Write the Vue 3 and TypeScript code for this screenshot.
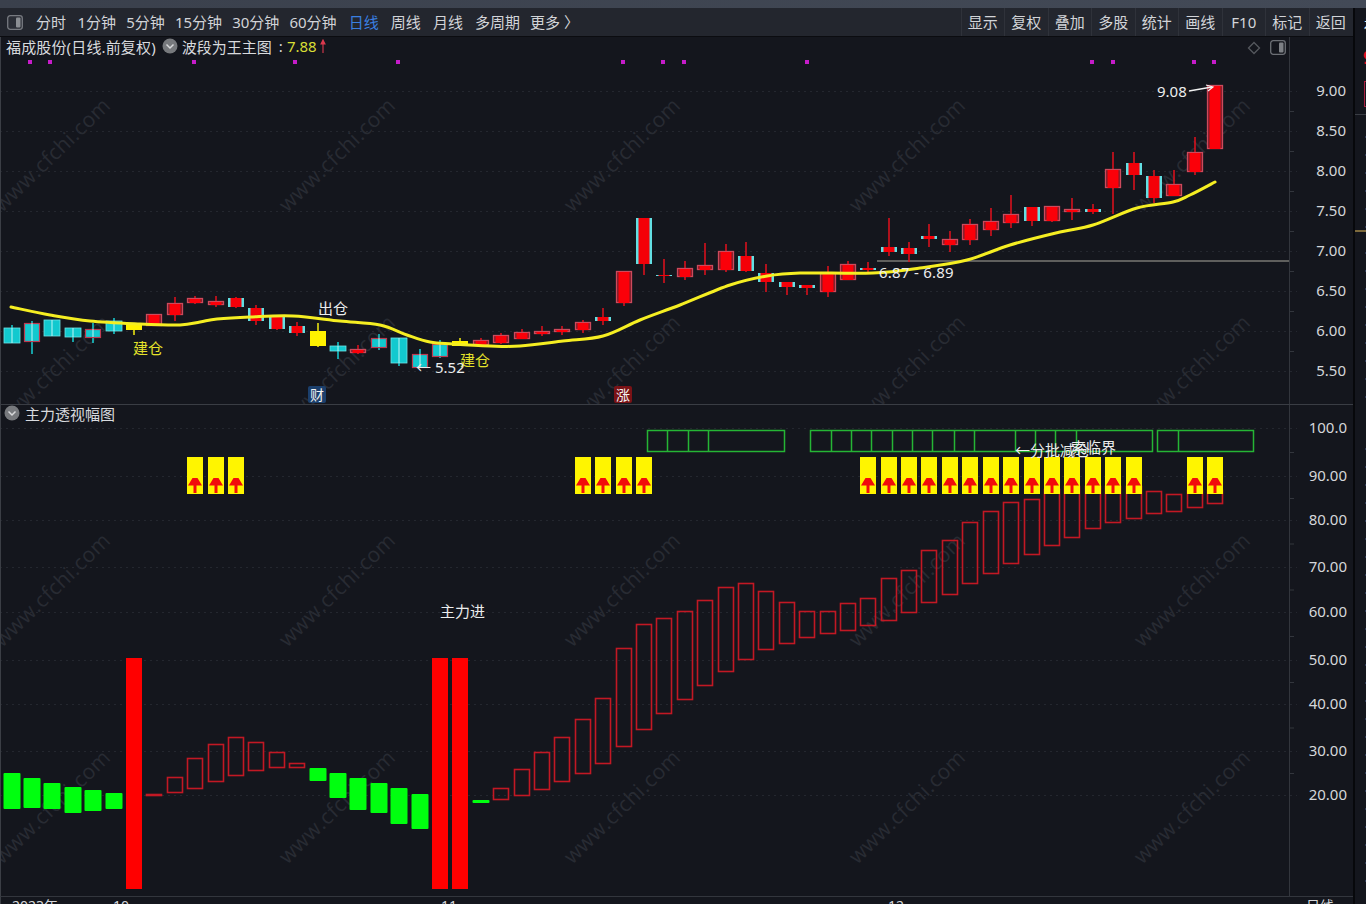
<script setup lang="ts">
type CandleKind = 'r' | 'c' | 'rc' | 'cr' | 'y'
interface Candle { x: number; top: number; bottom: number; high: number; low: number; kind: CandleKind }
type BarKind = 'g' | 'R' | 'o'
interface Bar { x: number; top: number; bottom: number; kind: BarKind }

const xAt = (i: number): number => Math.round(11.5 + 20.4 * i)

const leftTabs = ['分时', '1分钟', '5分钟', '15分钟', '30分钟', '60分钟', '日线', '周线', '月线', '多周期', '更多 〉']
const rightTabs = ['显示', '复权', '叠加', '多股', '统计', '画线', 'F10', '标记', '返回']

const rawCandles: [number, number, number, number, CandleKind][] = [
  [328, 343, 325, 343, 'c'], [323, 341, 321, 354, 'cr'], [320, 336, 320, 336, 'c'], [328, 337, 328, 342, 'c'],
  [329, 337, 323, 343, 'cr'], [321, 331, 318, 334, 'c'], [323, 330, 323, 335, 'y'], [314, 325, 314, 326, 'r'],
  [303, 314, 297, 321, 'r'], [298, 302, 296, 304, 'r'], [301, 304, 296, 307, 'r'], [298, 307, 297, 308, 'rc'],
  [308, 321, 305, 325, 'rc'], [317, 329, 315, 330, 'rc'], [326, 333, 322, 336, 'rc'], [331, 346, 323, 347, 'y'],
  [346, 351, 342, 359, 'c'], [349, 352, 345, 354, 'r'], [338, 347, 334, 350, 'cr'], [338, 363, 338, 366, 'c'],
  [354, 367, 349, 368, 'cr'], [344, 356, 340, 358, 'cr'], [341, 346, 338, 346, 'y'], [340, 344, 338, 346, 'r'],
  [335, 342, 333, 344, 'r'], [332, 338, 329, 339, 'r'], [331, 333, 326, 336, 'r'], [329, 331, 326, 335, 'r'],
  [322, 329, 320, 333, 'r'], [317, 321, 308, 325, 'rc'], [271, 302, 271, 306, 'r'], [218, 264, 218, 275, 'rc'],
  [275, 276, 259, 283, 'rc'], [268, 276, 261, 280, 'r'], [265, 269, 243, 275, 'r'], [251, 269, 244, 272, 'r'],
  [256, 271, 242, 272, 'rc'], [273, 282, 264, 292, 'rc'], [282, 287, 282, 295, 'rc'], [285, 288, 285, 295, 'rc'],
  [273, 291, 266, 297, 'r'], [264, 279, 261, 280, 'r'], [268, 270, 262, 274, 'rc'], [247, 252, 218, 256, 'rc'],
  [248, 254, 242, 262, 'rc'], [236, 239, 224, 247, 'rc'], [239, 244, 231, 252, 'r'], [224, 239, 219, 245, 'r'],
  [221, 229, 208, 236, 'r'], [214, 222, 195, 228, 'r'], [207, 221, 207, 226, 'rc'], [206, 220, 206, 222, 'r'],
  [209, 211, 198, 220, 'r'], [209, 212, 204, 214, 'rc'], [169, 187, 152, 214, 'r'], [163, 175, 152, 190, 'rc'],
  [176, 198, 170, 203, 'rc'], [184, 195, 170, 195, 'r'], [152, 171, 137, 175, 'r'], [85, 148, 85, 148, 'r'],
]
const candles: Candle[] = rawCandles.map((c, i) => ({ x: xAt(i), top: c[0], bottom: c[1], high: c[2], low: c[3], kind: c[4] }))

const rawBars: [number, number, BarKind][] = [
  [773, 809, 'g'], [778, 808, 'g'], [783, 809, 'g'], [787, 813, 'g'], [790, 811, 'g'], [793, 809, 'g'], [658, 889, 'R'],
  [794, 795, 'o'], [777, 792, 'o'], [758, 788, 'o'], [744, 781, 'o'], [737, 775, 'o'], [742, 770, 'o'], [752, 767, 'o'],
  [763, 767, 'o'], [768, 781, 'g'], [773, 798, 'g'], [778, 810, 'g'], [783, 813, 'g'], [788, 824, 'g'], [794, 829, 'g'],
  [658, 889, 'R'], [658, 889, 'R'], [800, 803, 'g'], [788, 799, 'o'], [769, 795, 'o'], [752, 789, 'o'], [737, 781, 'o'],
  [719, 773, 'o'], [698, 763, 'o'], [648, 746, 'o'], [624, 729, 'o'], [618, 713, 'o'], [611, 699, 'o'], [600, 685, 'o'],
  [587, 671, 'o'], [583, 659, 'o'], [591, 649, 'o'], [602, 643, 'o'], [611, 637, 'o'], [611, 633, 'o'], [603, 630, 'o'],
  [598, 625, 'o'], [578, 620, 'o'], [570, 612, 'o'], [550, 602, 'o'], [540, 594, 'o'], [522, 583, 'o'], [511, 573, 'o'],
  [502, 563, 'o'], [499, 554, 'o'], [489, 545, 'o'], [486, 537, 'o'], [486, 528, 'o'], [486, 522, 'o'], [486, 518, 'o'],
  [491, 513, 'o'], [494, 511, 'o'], [490, 507, 'o'], [490, 503, 'o'],
]
const bars: Bar[] = rawBars.map((b, i) => ({ x: xAt(i), top: b[0], bottom: b[1], kind: b[2] }))

const signalIdx = [9, 10, 11, 28, 29, 30, 31, 42, 43, 44, 45, 46, 47, 48, 49, 50, 51, 52, 53, 54, 55, 58, 59]
const signals = signalIdx.map(xAt)
const arrowPoints = (x: number): string =>
  `${x - 2.5},478 ${x + 2.5},478 ${x + 7},485.5 ${x + 1.5},485.5 ${x + 1.5},493 ${x - 1.5},493 ${x - 1.5},485.5 ${x - 7},485.5`

const dots = [30, 50, 194, 295, 398, 623, 663, 684, 807, 1092, 1113, 1194, 1214]

const maPoints: [number, number][] = [
  [11, 307], [50, 315], [90, 321], [140, 324], [180, 325], [200, 322], [217, 319], [250, 317], [293, 316], [340, 321],
  [380, 325], [407, 335], [430, 342], [453, 344], [490, 346], [520, 346], [563, 341], [603, 336], [640, 320], [680, 305],
  [730, 285], [767, 276], [800, 273], [873, 273], [920, 268], [967, 260], [1010, 245], [1060, 232], [1093, 225],
  [1137, 208], [1173, 202], [1190, 195], [1215, 182],
]
const smoothPath = (pts: [number, number][]): string => {
  let d = `M${pts[0][0]} ${pts[0][1]}`
  for (let i = 0; i < pts.length - 1; i++) {
    const p0 = pts[Math.max(0, i - 1)]
    const p1 = pts[i]
    const p2 = pts[i + 1]
    const p3 = pts[Math.min(pts.length - 1, i + 2)]
    const c1x = p1[0] + (p2[0] - p0[0]) / 6
    const c1y = p1[1] + (p2[1] - p0[1]) / 6
    const c2x = p2[0] - (p3[0] - p1[0]) / 6
    const c2y = p2[1] - (p3[1] - p1[1]) / 6
    d += ` C${c1x.toFixed(1)} ${c1y.toFixed(1)} ${c2x.toFixed(1)} ${c2y.toFixed(1)} ${p2[0]} ${p2[1]}`
  }
  return d
}
const maPath = smoothPath(maPoints)

const upperAxis = [[91, '9.00'], [131, '8.50'], [171, '8.00'], [211, '7.50'], [251, '7.00'], [291, '6.50'], [331, '6.00'], [371, '5.50']] as const
const lowerAxis = [[428, '100.0'], [476, '90.00'], [520, '80.00'], [567, '70.00'], [612, '60.00'], [660, '50.00'], [704, '40.00'], [751, '30.00'], [795, '20.00']] as const

const minorTicks = (ys: readonly (readonly [number, string])[]): number[] => {
  const out: number[] = []
  ys.forEach((row, i) => {
    if (i < ys.length - 1) out.push((row[0] + ys[i + 1][0]) / 2)
  })
  return out
}

const cellGroups = [
  { from: 647, to: 784, seps: [667, 688, 708] },
  { from: 810, to: 1152, seps: [831, 851, 871, 892, 912, 932, 954, 974, 1015, 1035, 1055, 1076] },
  { from: 1157, to: 1253, seps: [1178] },
]

const wmXs = [57, 342, 627, 912, 1197]
const wmUpper = [160, 377]
const wmLower = [595, 812]

const sideRows = [128, 146, 164, 182, 200, 218, 244, 262, 280, 298, 316, 334, 352, 370, 388, 440, 458, 476, 494, 512, 530, 548, 566, 584, 602, 620, 638, 656, 674, 692, 710, 728, 746, 764, 782, 800, 818, 836, 854, 872]

const wickColor = (k: CandleKind): string => (k === 'c' || k === 'cr' ? '#17cfd3' : k === 'y' ? '#f5ee10' : '#e3101c')
</script>

<template>
  <div class="screen">
    <div class="topstrip"></div>
    <div class="body">
      <div class="main">
        <header class="toolbar">
          <span class="panel-icon">
            <svg width="16" height="15" viewBox="0 0 16 15">
              <rect x="0.7" y="0.7" width="14.6" height="13.6" rx="2.5" fill="#2b2e36" stroke="#777a80" stroke-width="1.3" />
              <rect x="9" y="2.5" width="4.5" height="10" rx="1" fill="#8b8e93" />
            </svg>
          </span>
          <nav class="tabs">
            <span v-for="t in leftTabs" :key="t" class="tab" :class="{ active: t === '日线' }">{{ t }}</span>
          </nav>
          <nav class="actions">
            <span v-for="t in rightTabs" :key="t" class="action">{{ t }}</span>
          </nav>
        </header>

        <section class="pane pane-upper">
          <svg class="plot" width="1352" height="367" viewBox="1 37 1352 367">
            <text v-for="(p, i) in wmXs.flatMap(x => wmUpper.map(y => [x, y]))" :key="'wu' + i" :transform="`translate(${p[0]} ${p[1]}) rotate(-44)`" class="wm" text-anchor="middle">www.cfchi.com</text>

            <line v-for="a in upperAxis" :key="a[1]" x1="0" x2="1297" :y1="a[0] + 0.5" :y2="a[0] + 0.5" class="grid" />
            <line x1="1289.5" x2="1289.5" y1="37" y2="404" class="axis" />
            <line v-for="y in minorTicks(upperAxis)" :key="y" x1="1290" x2="1294" :y1="y + 0.5" :y2="y + 0.5" class="axis" />
            <text v-for="a in upperAxis" :key="a[1] + 't'" x="1346" :y="a[0] + 5" class="axis-label" text-anchor="end">{{ a[1] }}</text>

            <rect v-for="x in dots" :key="x" :x="x - 2" y="60" width="4" height="4" fill="#c61cc9" />

            <line x1="877" x2="1289" y1="261" y2="261" stroke="#a9a89d" stroke-width="1.2" />

            <g v-for="(c, i) in candles" :key="'c' + i">
              <line :x1="c.x" :x2="c.x" :y1="c.high" :y2="c.low" :stroke="wickColor(c.kind)" stroke-width="1.5" />
              <template v-if="c.kind === 'c'">
                <rect :x="c.x - 8" :y="c.top" width="16" :height="c.bottom - c.top" fill="#12c9cf" stroke="#6fe3e6" stroke-width="0.8" />
                <line :x1="c.x" :x2="c.x" :y1="c.top" :y2="c.bottom" stroke="#bff5f6" stroke-width="1" />
              </template>
              <template v-else-if="c.kind === 'cr'">
                <rect :x="c.x - 7.5" :y="c.top + 0.5" width="15" :height="c.bottom - c.top" fill="#12c9cf" stroke="#bd3a50" stroke-width="1.2" />
                <line :x1="c.x" :x2="c.x" :y1="c.top" :y2="c.bottom" stroke="#bff5f6" stroke-width="1" />
              </template>
              <template v-else-if="c.kind === 'rc'">
                <rect :x="c.x - 8" :y="c.top" width="16" :height="c.bottom - c.top" fill="#63dfe3" />
                <rect :x="c.x - 5.5" :y="c.top" width="11" :height="c.bottom - c.top" fill="#f40008" />
              </template>
              <template v-else-if="c.kind === 'y'">
                <rect :x="c.x - 8" :y="c.top" width="16" :height="c.bottom - c.top" fill="#fff200" />
              </template>
              <template v-else>
                <rect :x="c.x - 7.5" :y="c.top + 0.5" width="15" :height="c.bottom - c.top" fill="#7a1c28" stroke="#cc4a5c" stroke-width="1.3" />
                <rect :x="c.x - 5.5" :y="c.top + 1" width="11" :height="c.bottom - c.top" fill="#fb0009" />
              </template>
            </g>

            <path :d="maPath" class="ma" />

            <text x="133" y="354" class="lbl yellow">建仓</text>
            <text x="318" y="314" class="lbl white">出仓</text>
            <text x="460" y="366" class="lbl yellow">建仓</text>
            <text y="373" class="lbl white"><tspan x="416">←</tspan><tspan x="435">5.52</tspan></text>
            <text x="879" y="278" class="lbl white tracked">6.87 - 6.89</text>
            <text x="1157" y="97" class="lbl white">9.08</text>
            <line x1="1189" y1="91" x2="1212" y2="87" stroke="#f2f2f2" stroke-width="1.3" />
            <polyline points="1206,85 1213,87 1208,91" fill="none" stroke="#f2f2f2" stroke-width="1.2" />

            <rect x="308" y="386" width="18" height="17" rx="2" fill="#1b3f6c" />
            <text x="317" y="400" class="badge" text-anchor="middle">财</text>
            <rect x="614" y="386" width="18" height="17" rx="2" fill="#7a1216" />
            <text x="623" y="400" class="badge" text-anchor="middle">涨</text>
          </svg>

          <div class="title-bar">
            <span class="stock">福成股份(日线.前复权)</span>
            <svg class="chevron first" width="16" height="16" viewBox="0 0 16 16">
              <circle cx="8" cy="8" r="7.5" fill="#77797d" />
              <path d="M4.5 6.5 8 10l3.5-3.5" fill="none" stroke="#d8d9db" stroke-width="1.5" />
            </svg>
            <span>波段为王主图</span>
            <span class="colon">:</span>
            <span class="price">7.88</span>
            <svg class="up" width="6" height="15" viewBox="0 0 6 15">
              <path d="M3 14V1M1 5 3 1l2 4Z" fill="#dc3a4e" stroke="#dc3a4e" stroke-width="1.1" />
            </svg>
          </div>

          <div class="corner-icons">
            <svg width="14" height="14" viewBox="0 0 14 14">
              <path d="M7 1.5 12.5 7 7 12.5 1.5 7Z" fill="none" stroke="#55585e" stroke-width="1.3" />
            </svg>
            <svg width="16" height="15" viewBox="0 0 16 15">
              <rect x="0.7" y="0.7" width="14.6" height="13.6" rx="2.5" fill="none" stroke="#6c6f75" stroke-width="1.3" />
              <rect x="9" y="2.5" width="4.5" height="10" rx="1" fill="#7d8085" />
            </svg>
          </div>
        </section>

        <section class="pane pane-lower">
          <svg class="plot" width="1352" height="491" viewBox="1 405 1352 491">
            <text v-for="(p, i) in wmXs.flatMap(x => wmLower.map(y => [x, y]))" :key="'wl' + i" :transform="`translate(${p[0]} ${p[1]}) rotate(-44)`" class="wm" text-anchor="middle">www.cfchi.com</text>

            <line v-for="a in lowerAxis" :key="a[1]" x1="0" x2="1297" :y1="a[0] + 0.5" :y2="a[0] + 0.5" class="grid" />
            <line x1="1289.5" x2="1289.5" y1="405" y2="896" class="axis" />
            <line v-for="y in minorTicks(lowerAxis)" :key="y" x1="1290" x2="1294" :y1="y + 0.5" :y2="y + 0.5" class="axis" />
            <text v-for="a in lowerAxis" :key="a[1] + 't'" x="1347" :y="a[0] + 5" class="axis-label" text-anchor="end">{{ a[1] }}</text>

            <g v-for="(b, i) in bars" :key="'b' + i">
              <rect v-if="b.kind === 'g'" :x="b.x - 8.5" :y="b.top" width="17" :height="b.bottom - b.top" rx="1" fill="#00ff0f" />
              <rect v-else-if="b.kind === 'R'" :x="b.x - 8" :y="b.top" width="16" :height="b.bottom - b.top" fill="#ff0000" />
              <rect v-else :x="b.x - 7.5" :y="b.top + 0.5" width="15" :height="b.bottom - b.top" fill="none" stroke="#c21824" stroke-width="1.6" />
            </g>

            <g v-for="g in cellGroups" :key="g.from">
              <rect :x="g.from + 0.5" y="430.5" :width="g.to - g.from" height="21" fill="none" stroke="#25b535" stroke-width="1.5" />
              <line v-for="s in g.seps" :key="s" :x1="s + 0.5" :x2="s + 0.5" y1="431" y2="451" stroke="#25b535" stroke-width="1.5" />
            </g>

            <g v-for="x in signals" :key="'s' + x">
              <rect :x="x - 8" y="457" width="16" height="37" fill="#fff500" />
              <polygon :points="arrowPoints(x)" fill="#f20b0b" />
            </g>

            <text x="1015" y="456" class="lbl white">←分批减仓</text>
            <text x="1071" y="453" class="lbl white">索临界</text>
            <text x="440" y="617" class="lbl white">主力进</text>
          </svg>

          <div class="title-bar lower-title">
            <svg class="chevron" width="16" height="16" viewBox="0 0 16 16">
              <circle cx="8" cy="8" r="7.5" fill="#77797d" />
              <path d="M4.5 6.5 8 10l3.5-3.5" fill="none" stroke="#d8d9db" stroke-width="1.5" />
            </svg>
            <span>主力透视幅图</span>
          </div>
        </section>

        <footer class="timeline">
          <span class="year">2023年</span>
          <span class="month m10">10</span>
          <span class="month m11">11</span>
          <span class="month m12">12</span>
          <span class="period">日线</span>
        </footer>
      </div>

      <aside class="side">
        <span class="side-name">福</span>
        <span class="side-price">9</span>
        <span class="side-box"></span>
        <span class="side-line"></span>
        <span class="side-gold"></span>
        <span v-for="y in sideRows" :key="y" class="side-dot" :style="{ top: y + 'px' }"></span>
      </aside>
    </div>
  </div>
</template>

<style>
html, body { margin: 0; background: #14161d; overflow: hidden; }
</style>

<style scoped>
.screen {
  width: 1366px;
  height: 904px;
  display: flex;
  flex-direction: column;
  background: #14161d;
  font-family: "Noto Sans", "Noto Sans CJK SC", sans-serif;
  color: #d4d6da;
  overflow: hidden;
}
.topstrip {
  height: 8px;
  flex: none;
  background: linear-gradient(90deg, #3a404c, #434a57);
}
.body { flex: 1; display: flex; min-height: 0; }
.main {
  width: 1353px;
  flex: none;
  display: flex;
  flex-direction: column;
  border-right: 2px solid #07080b;
  box-sizing: content-box;
}
.toolbar {
  height: 28px;
  flex: none;
  display: flex;
  align-items: center;
  background: #23262e;
  border-bottom: 1px solid #0b0c10;
  padding-left: 7px;
}
.panel-icon { display: flex; width: 29px; flex: none; }
.tabs { display: flex; gap: 10.1px; font-size: 15px; white-space: nowrap; }
.tab { color: #d2d4d8; line-height: 28px; }
.tab:first-child { margin-right: 1.4px; }
.tab:nth-child(n+7):nth-child(-n+10) { margin-left: 2px; }
.tab.active { color: #3a7fe0; }
.actions { margin-left: auto; display: flex; font-size: 15px; height: 100%; padding-right: 1px; }
.action {
  width: 43.5px;
  line-height: 28px;
  text-align: center;
  color: #d2d4d8;
  border-left: 1px solid #2f323a;
  box-sizing: border-box;
}
.pane { position: relative; flex: none; border-left: 1px solid #3b3e45; box-sizing: border-box; }
.pane-upper { height: 367px; }
.pane-lower { height: 492px; border-top: 1px solid #3a3d44; }
.plot { display: block; }
.title-bar {
  position: absolute;
  left: 5px;
  top: -1px;
  height: 20px;
  display: flex;
  align-items: center;
  font-size: 15px;
  color: #d8dade;
  white-space: nowrap;
}
.stock { letter-spacing: 0.15px; }
.lower-title { left: 3px; top: -2px; }
.chevron { flex: none; }
.chevron.first { margin: 0 4px 0 6px; }
.lower-title .chevron { margin-right: 5px; }
.colon { margin: 0 4px 0 7px; color: #d8dade; }
.price { color: #d8de35; }
.up { flex: none; margin-left: 3px; }
.corner-icons {
  position: absolute;
  right: 67px;
  top: 3px;
  display: flex;
  align-items: center;
  gap: 9px;
}
.wm {
  font-family: "Open Sans", "Noto Sans", sans-serif;
  font-size: 21px;
  fill: #282b33;
  letter-spacing: 0.4px;
}
.grid { stroke: #24272f; stroke-width: 1; stroke-dasharray: 2 4; }
.axis { stroke: #33363d; stroke-width: 1; }
.axis-label { font-size: 15px; fill: #d4d6da; }
.ma { fill: none; stroke: #f5ee22; stroke-width: 3; stroke-linejoin: round; stroke-linecap: round; }
.lbl { font-size: 15px; }
.lbl.white { fill: #eceded; }
.lbl.yellow { fill: #e4e22a; }
.lbl.tracked { letter-spacing: 0.25px; }
.badge { font-size: 14px; fill: #f2f2f2; }
.timeline {
  position: relative;
  flex: none;
  height: 8px;
  overflow: hidden;
  border-left: 1px solid #3b3e45;
  border-top: 1px solid #33363d;
  box-sizing: border-box;
  font-size: 14px;
  color: #d4d6da;
}
.timeline span { position: absolute; top: -1px; line-height: 20px; }
.year { left: 11px; }
.m10 { left: 112px; }
.m11 { left: 440px; }
.m12 { left: 887px; }
.period { left: 1305px; }
.side {
  position: relative;
  flex: 1;
  overflow: hidden;
  background: #14161d;
}
.side-name { position: absolute; left: 9px; top: 8px; font-size: 16px; line-height: 20px; color: #e9ebee; }
.side-price { position: absolute; left: 8px; top: 38px; font-size: 18px; line-height: 22px; color: #e01020; font-weight: 700; }
.side-box { position: absolute; left: 9px; top: 73px; width: 12px; height: 26px; border: 1px solid #a82040; box-sizing: border-box; }
.side-line { position: absolute; left: 0; right: 0; top: 106px; height: 1px; background: #3a3d44; }
.side-gold { position: absolute; left: 0; right: 0; top: 222px; height: 2px; background: #7d6a3c; }
.side-dot { position: absolute; left: 10px; width: 3px; height: 2px; background: #2b3650; }
</style>
